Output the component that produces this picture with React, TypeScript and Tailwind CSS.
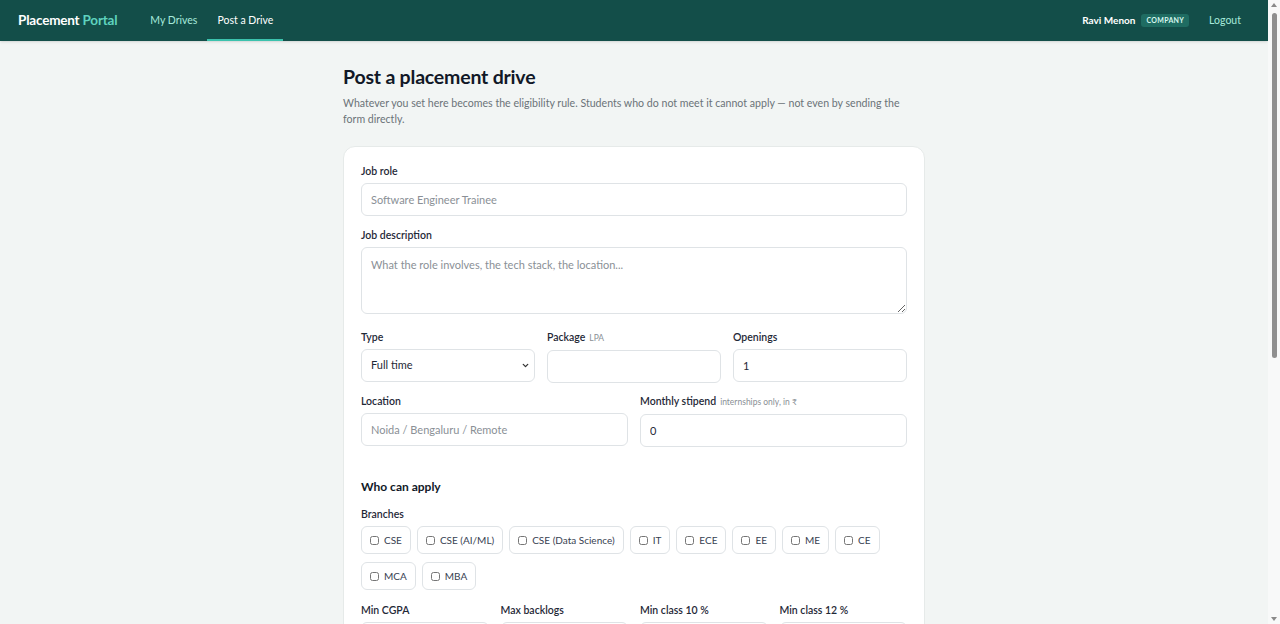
import { ChevronDown } from "lucide-react";

const branches = ["CSE", "CSE (AI/ML)", "CSE (Data Science)", "IT", "ECE", "EE", "ME", "CE", "MCA", "MBA"];

const inputCls =
  "block w-full h-[33px] rounded-md border border-[#dfe3e6] bg-white px-[9px] text-[11px] text-[#1f2937] placeholder:text-[#8a9096] outline-none";

function Label({ children, hint }: { children: React.ReactNode; hint?: string }) {
  return (
    <div className="mb-[5px] text-[10.5px] font-semibold leading-[13px] text-[#1f2937]">
      {children}
      {hint && <span className="ml-1 text-[8.5px] font-normal text-[#8a9096]">{hint}</span>}
    </div>
  );
}

export default function App() {
  return (
    <div className="min-h-screen bg-[#f2f5f4] pr-[12px] font-['Lato','Noto_Sans',sans-serif] text-[#1f2937]">
      {/* top bar */}
      <nav className="flex h-[41px] items-center bg-[#134e49] pl-[18px] pr-[27px] shadow-sm">
        <div className="mr-[23px] text-[13.5px] font-bold tracking-[-0.2px] text-white">
          Placement <span className="text-[#5fd3bf]">Portal</span>
        </div>
        <a className="flex h-full items-center px-[10px] text-[10.5px] text-[#a7eadc]">My Drives</a>
        <a className="flex h-full items-center border-b-2 border-[#3cc2ad] px-[10px] pt-[2px] text-[10.5px] text-white">
          Post a Drive
        </a>
        <div className="ml-auto flex items-center">
          <span className="text-[10px] font-bold text-white">Ravi Menon</span>
          <span className="ml-[6px] rounded-[3px] bg-[#1f6c62] px-[5px] py-[1px] text-[7px] font-bold tracking-[0.3px] text-[#d7f7ef]">
            COMPANY
          </span>
          <a className="ml-[20px] text-[10.5px] text-[#a7eadc]">Logout</a>
        </div>
      </nav>

      <main className="mx-auto w-[582px] pb-10 pt-[24px]">
        <h1 className="text-[19.5px] font-bold leading-[24px] tracking-[-0.2px] text-[#111827]">Post a placement drive</h1>
        <p className="mt-[6px] max-w-[560px] text-[10.6px] leading-[16px] text-[#6b7378]">
          Whatever you set here becomes the eligibility rule. Students who do not meet it cannot apply — not even by sending
          the form directly.
        </p>

        <div className="mt-[19px] rounded-xl border border-[#e6eae9] bg-white px-[17px] pb-6 pt-[18px]">
          <Label>Job role</Label>
          <input className={inputCls} placeholder="Software Engineer Trainee" />

          <div className="mt-[13px]">
            <Label>Job description</Label>
            <textarea
              className={inputCls + " h-[67px] resize-y py-[9px] leading-[15px]"}
              placeholder="What the role involves, the tech stack, the location..."
            />
          </div>

          <div className="mt-[17px] grid grid-cols-3 gap-[12px]">
            <div>
              <Label>Type</Label>
              <div className="relative">
                <select className={inputCls + " appearance-none"} defaultValue="Full time">
                  <option>Full time</option>
                  <option>Internship</option>
                </select>
                <ChevronDown className="pointer-events-none absolute right-[5px] top-[12px] h-[9px] w-[9px] text-[#333]" strokeWidth={3.5} />
              </div>
            </div>
            <div>
              <Label hint="LPA">Package</Label>
              <input className={inputCls} />
            </div>
            <div>
              <Label>Openings</Label>
              <input className={inputCls} defaultValue="1" />
            </div>
          </div>

          <div className="mt-[12px] grid grid-cols-2 gap-[12px]">
            <div>
              <Label>Location</Label>
              <input className={inputCls} placeholder="Noida / Bengaluru / Remote" />
            </div>
            <div>
              <Label hint="internships only, in ₹">Monthly stipend</Label>
              <input className={inputCls} defaultValue="0" />
            </div>
          </div>

          <h2 className="mt-[32px] text-[12px] font-bold leading-[16px] text-[#111827]">Who can apply</h2>

          <div className="mt-[13px]">
            <Label>Branches</Label>
            <div className="flex flex-wrap gap-x-[6px] gap-y-[8px]">
              {branches.map((b) => (
                <label
                  key={b}
                  className="flex h-[28px] items-center gap-[5px] rounded-md border border-[#dfe3e6] bg-white px-[8px] text-[10px] text-[#374151]"
                >
                  <input type="checkbox" className="h-[9px] w-[9px] accent-[#0f766e]" />
                  {b}
                </label>
              ))}
            </div>
          </div>

          <div className="mt-[14px] grid grid-cols-4 gap-[12px]">
            {["Min CGPA", "Max backlogs", "Min class 10 %", "Min class 12 %"].map((l) => (
              <div key={l}>
                <Label>{l}</Label>
                <input className={inputCls} />
              </div>
            ))}
          </div>
        </div>
      </main>

      {/* browser scrollbar */}
      <div className="fixed right-0 top-0 flex h-screen w-[12px] flex-col items-center bg-[#f8f9f9]">
        <div className="mt-[3px] h-0 w-0 border-x-[3px] border-b-[4px] border-x-transparent border-b-[#8a8a8a]" />
        <div className="mt-[6px] h-[345px] w-[5px] rounded-full bg-[#8f8f8f]" />
        <div className="mb-[3px] mt-auto h-0 w-0 border-x-[3px] border-t-[4px] border-x-transparent border-t-[#8a8a8a]" />
      </div>
    </div>
  );
}
